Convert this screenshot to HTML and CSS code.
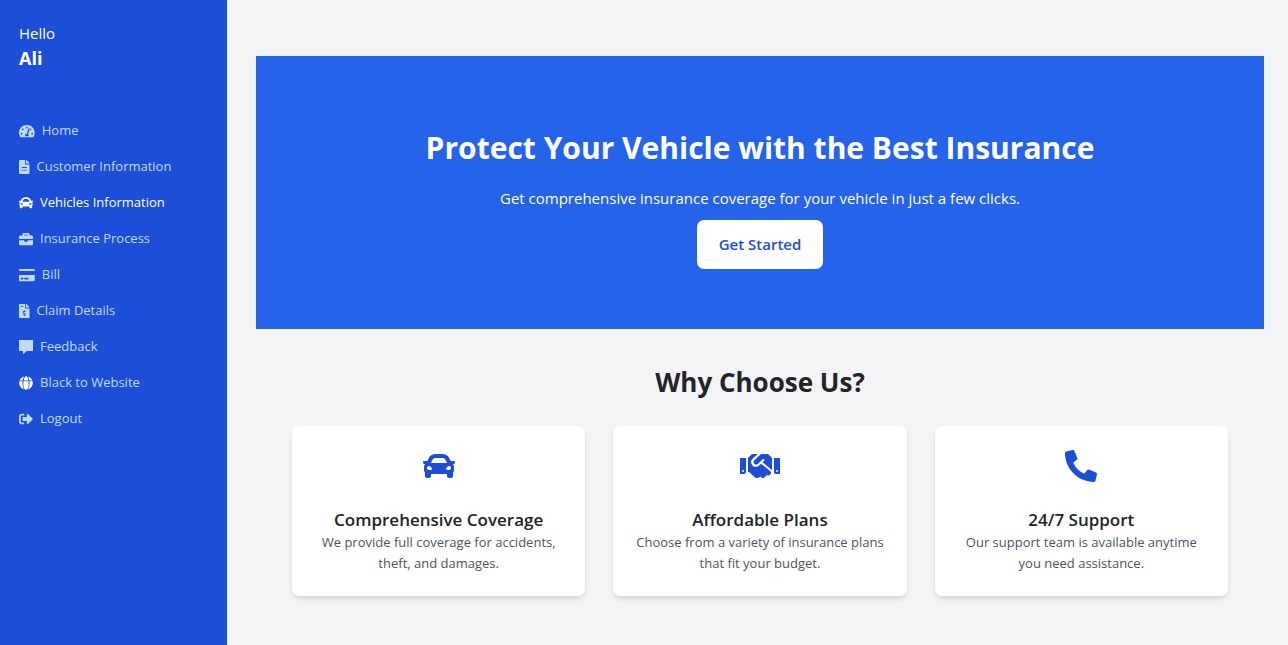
FILE: index.html
```html
<!DOCTYPE html>
<html lang="en">
<head>
<meta charset="utf-8">
<meta name="viewport" content="width=device-width, initial-scale=1">
<title>Vehicle Insurance</title>
<link rel="stylesheet" href="styles.css">
</head>
<body>
<div class="layout">
  <aside class="sidebar">
    <p class="greeting">Hello</p>
    <p class="user-name">Ali</p>
    <nav class="menu">
      <a class="menu-link" href="#home"><svg class="icon" viewBox="0 0 576 512"><path d="M288 32C129 32 0 161 0 320c0 53 14 102 39 145 6 9 16 15 27 15h444c11 0 21-6 27-15 25-43 39-92 39-145C576 161 447 32 288 32zm0 64c15 0 27 10 31 24l-9 28c-6 7-13 12-22 12a32 32 0 0 1 0-64zM96 384a32 32 0 1 1 0-64 32 32 0 0 1 0 64zm48-160a32 32 0 1 1 0-64 32 32 0 0 1 0 64zm247-40-61 184c13 11 22 28 22 48 0 12-4 23-9 32H233c-5-9-9-20-9-32 0-34 27-62 61-64l61-183a24 24 0 0 1 45 15zm15 50 23-69c1-1 2-1 3-1a32 32 0 1 1-26 70zm74 150a32 32 0 1 1 0-64 32 32 0 0 1 0 64z"/></svg>Home</a>
      <a class="menu-link" href="#customer"><svg class="icon" viewBox="0 0 384 512"><path d="M224 136V0H24A24 24 0 0 0 0 24v464a24 24 0 0 0 24 24h336a24 24 0 0 0 24-24V160H248a24 24 0 0 1-24-24zm64 236a12 12 0 0 1-12 12H108a12 12 0 0 1-12-12v-8a12 12 0 0 1 12-12h168a12 12 0 0 1 12 12zm0-96a12 12 0 0 1-12 12H108a12 12 0 0 1-12-12v-8a12 12 0 0 1 12-12h168a12 12 0 0 1 12 12zm96-154v6H256V0h6c7 0 13 2 17 7l98 98c5 5 7 11 7 17z"/></svg>Customer Information</a>
      <a class="menu-link menu-link-active" href="#vehicles"><svg class="icon" viewBox="0 0 512 512"><path d="M500 176h-60l-15-37C404 85 353 48 294 48h-76c-59 0-110 37-131 91l-15 37H12c-8 0-14 7-12 15l6 24c1 5 6 9 12 9h20c-14 12-22 29-22 48v48c0 16 6 31 16 42v54c0 18 14 32 32 32h32c18 0 32-14 32-32v-32h256v32c0 18 14 32 32 32h32c18 0 32-14 32-32v-54c10-11 16-26 16-42v-48c0-19-8-36-22-48h20c6 0 11-4 12-9l6-24c2-8-4-15-12-15zm-353-13c11-30 39-51 71-51h76c32 0 60 21 71 51l19 45H128zM96 320c-19 0-32-13-32-32s13-32 32-32 48 29 48 48-29 16-48 16zm320 0c-19 0-48 3-48-16s29-48 48-48 32 13 32 32-13 32-32 32z"/></svg>Vehicles Information</a>
      <a class="menu-link" href="#process"><svg class="icon" viewBox="0 0 512 512"><path d="M320 336a16 16 0 0 1-16 16h-96a16 16 0 0 1-16-16v-36H0v148c0 18 14 32 32 32h448c18 0 32-14 32-32V300H320zm144-208h-80V80c0-26-22-48-48-48H176c-26 0-48 22-48 48v48H48c-26 0-48 22-48 48v84h512v-84c0-26-22-48-48-48zm-144 0H192V96h128z"/></svg>Insurance Process</a>
      <a class="menu-link" href="#bill"><svg class="icon" viewBox="0 0 576 512"><path d="M0 448c0 18 14 32 32 32h512c18 0 32-14 32-32V256H0zm192-84a12 12 0 0 1 12-12h136a12 12 0 0 1 12 12v40a12 12 0 0 1-12 12H204a12 12 0 0 1-12-12zm-128 0a12 12 0 0 1 12-12h72a12 12 0 0 1 12 12v40a12 12 0 0 1-12 12H76a12 12 0 0 1-12-12zM576 56v56H0V56c0-13 11-24 24-24h528c13 0 24 11 24 24z"/></svg>Bill</a>
      <a class="menu-link" href="#claims"><svg class="icon" viewBox="0 0 384 512"><path d="M377 105 279 7c-4-5-10-7-17-7h-6v128h128v-6c0-6-2-12-7-17zM224 136V0H24A24 24 0 0 0 0 24v464a24 24 0 0 0 24 24h336a24 24 0 0 0 24-24V160H248a24 24 0 0 1-24-24zM64 72c0-4 4-8 8-8h80c4 0 8 4 8 8v16c0 4-4 8-8 8H72c-4 0-8-4-8-8zm144 344v24c0 4-4 8-8 8h-16c-4 0-8-4-8-8v-24c-11-1-22-5-31-12-4-3-4-9-1-12l12-11c3-3 7-3 11-1s8 3 12 3h28c7 0 12-6 12-13 0-6-4-11-9-13l-45-13c-19-6-32-24-32-44 0-25 19-45 43-45v-24c0-4 4-8 8-8h16c4 0 8 4 8 8v24c11 1 22 5 31 12 4 3 4 9 1 12l-12 11c-3 3-7 3-11 1s-8-3-12-3h-28c-7 0-12 6-12 13 0 6 4 11 9 13l45 13c19 6 32 24 32 44 0 25-19 45-43 45z"/></svg>Claim Details</a>
      <a class="menu-link" href="#feedback"><svg class="icon" viewBox="0 0 512 512"><path d="M500 0H12C5 0 0 5 0 12v380c0 7 5 12 12 12h134v96c0 10 8 14 16 8l124-104h214c7 0 12-5 12-12V12c0-7-5-12-12-12z"/></svg>Feedback</a>
      <a class="menu-link" href="#website"><svg class="icon icon-bright" viewBox="0 0 512 512"><path d="M340 160C328 68 295 8 256 8s-72 60-84 152zm-180 96c0 22 1 44 3 64h186c2-20 3-42 3-64s-1-44-3-64H163c-2 20-3 42-3 64zm325-96C457 93 399 41 327 18c25 34 41 85 50 142zM185 18C113 41 55 93 27 160h108c9-57 25-108 50-142zm311 174H381c2 21 3 43 3 64s-1 43-3 64h115c5-20 8-42 8-64s-3-44-8-64zM128 256c0-21 1-43 3-64H16c-5 20-8 42-8 64s3 44 8 64h115c-2-21-3-43-3-64zm27 64c8 110 53 184 101 184s93-74 101-184zm172 174c80-20 140-90 169-174H381c-9 77-29 140-54 174zM16 320c28 84 89 154 169 174-25-34-45-97-54-174z"/></svg>Black to Website</a>
      <a class="menu-link" href="#logout"><svg class="icon" viewBox="0 0 512 512"><path d="M497 273 329 441c-15 15-41 4-41-17v-96H152a24 24 0 0 1-24-24v-96a24 24 0 0 1 24-24h136V88c0-21 26-32 41-17l168 168c9 9 9 25 0 34zM192 436v-40a12 12 0 0 0-12-12H96c-18 0-32-14-32-32V160c0-18 14-32 32-32h84a12 12 0 0 0 12-12V76a12 12 0 0 0-12-12H96c-53 0-96 43-96 96v192c0 53 43 96 96 96h84a12 12 0 0 0 12-12z"/></svg>Logout</a>
    </nav>
  </aside>
  <main class="content">
    <section class="hero">
      <h1 class="hero-title">Protect Your Vehicle with the Best Insurance</h1>
      <p class="hero-text">Get comprehensive insurance coverage for your vehicle in just a few clicks.</p>
      <button class="hero-button" type="button">Get Started</button>
    </section>
    <section class="features">
      <h2 class="features-title">Why Choose Us?</h2>
      <div class="cards">
        <article class="card">
          <svg class="card-icon" viewBox="0 0 512 512"><path d="M500 176h-60l-15-37C404 85 353 64 294 64h-76c-59 0-110 21-131 75l-15 37H12c-8 0-14 7-12 15l6 24c1 5 6 9 12 9h20c-14 12-22 29-22 48v48c0 16 6 31 16 42v54c0 18 14 32 32 32h32c18 0 32-14 32-32v-32h256v32c0 18 14 32 32 32h32c18 0 32-14 32-32v-54c10-11 16-26 16-42v-48c0-19-8-36-22-48h20c6 0 11-4 12-9l6-24c2-8-4-15-12-15zm-353-13c11-27 35-35 61-35h96c26 0 50 8 61 35l19 45H128zM96 320c-19 0-32-13-32-32s13-32 32-32 48 29 48 48-29 16-48 16zm320 0c-19 0-48 3-48-16s29-48 48-48 32 13 32 32-13 32-32 32z"/></svg>
          <h3 class="card-title">Comprehensive Coverage</h3>
          <p class="card-text">We provide full coverage for accidents, theft, and damages.</p>
        </article>
        <article class="card">
          <svg class="card-icon" viewBox="0 0 640 512"><path d="M434 64h-85c-8 0-16 3-22 8l-98 90c-17 16-17 42-3 58 13 14 40 18 58 2l80-73c7-6 17-5 23 1s5 17-1 23l-26 24 145 118c3 2 6 5 8 8V128l-55-55c-6-6-14-9-24-9zm110 64v224c0 18 14 32 32 32h64V128zm48 224a16 16 0 1 1 0-32 16 16 0 0 1 0 32zM0 384h64c18 0 32-14 32-32V128H0zm48-64a16 16 0 1 1 0 32 16 16 0 0 1 0-32zm437 21L336 219l-30 27c-32 29-80 26-109-4-29-31-26-79 5-108l82-70h-78c-9 0-17 3-23 9l-55 55v224h18l91 82c27 22 67 18 90-9l18 16c16 13 40 11 53-6l31-38 6 5c13 11 34 9 45-5l10-12c11-14 9-34-5-44z"/></svg>
          <h3 class="card-title">Affordable Plans</h3>
          <p class="card-text">Choose from a variety of insurance plans that fit your budget.</p>
        </article>
        <article class="card">
          <svg class="card-icon" viewBox="0 0 512 512"><path d="M19 24 123 0c11-2 22 3 27 14l48 112c4 10 1 21-7 28l-60 50c36 76 98 138 176 175l50-60c7-8 18-11 28-7l112 48c11 5 17 16 14 27l-24 104c-3 11-12 19-23 19C208 510 0 303 0 48c0-11 8-21 19-24z"/></svg>
          <h3 class="card-title">24/7 Support</h3>
          <p class="card-text">Our support team is available anytime you need assistance.</p>
        </article>
      </div>
    </section>
  </main>
</div>
</body>
</html>
```

FILE: styles.css
```css
* { box-sizing: border-box; }

body {
  margin: 0;
  background: #f3f4f6;
  color: #212529;
  font: 13px/21px "Segoe UI", "Open Sans", "Noto Sans", sans-serif;
}

h1, h2, h3, p { margin: 0; }

.layout {
  display: flex;
  min-height: 100vh;
}

.sidebar {
  flex: 0 0 227px;
  padding: 21px 19px;
  background: #1d4ed8;
  color: #fff;
}

.greeting {
  font-size: 15px;
  line-height: 25px;
}

.user-name {
  font-size: 18px;
  font-weight: 700;
  line-height: 25px;
}

.menu {
  display: flex;
  flex-direction: column;
  gap: 15px;
  margin-top: 49px;
}

.menu-link {
  display: flex;
  align-items: center;
  gap: 7px;
  color: #bfdbfe;
  text-decoration: none;
}

.menu-link-active, .icon-bright { color: #fff; }

.icon {
  height: 14px;
  fill: currentColor;
}

.content {
  flex: 1;
  padding: 56px 24px 48px 29px;
}

.hero {
  padding: 70px 28px 60px;
  background: #2563eb;
  color: #fff;
  text-align: center;
}

.hero-title {
  font-size: 30px;
  font-weight: 700;
  line-height: 44px;
}

.hero-text {
  margin-top: 16px;
  font-size: 15px;
  line-height: 25px;
}

.hero-button {
  margin-top: 9px;
  padding: 12px 22px;
  border: 0;
  border-radius: 7px;
  background: #fff;
  color: #1d4ed8;
  font: inherit;
  font-size: 15px;
  font-weight: 600;
  line-height: 25px;
}

.features {
  padding: 34px 36px 0;
  text-align: center;
}

.features-title {
  font-size: 26px;
  font-weight: 700;
  line-height: 38px;
}

.cards {
  display: grid;
  grid-template-columns: repeat(3, 1fr);
  gap: 28px;
  margin-top: 25px;
}

.card {
  padding: 24px 21px 22px;
  border-radius: 7px;
  background: #fff;
  box-shadow: 0 4px 6px -1px rgba(0, 0, 0, .1), 0 2px 4px -2px rgba(0, 0, 0, .1);
}

.card-icon {
  height: 32px;
  display: block;
  margin: 0 auto;
  fill: #1d4ed8;
}

.card-title {
  margin-top: 25px;
  font-size: 17px;
  font-weight: 600;
  line-height: 25px;
}

.card-text { color: #4b5563; }
```
